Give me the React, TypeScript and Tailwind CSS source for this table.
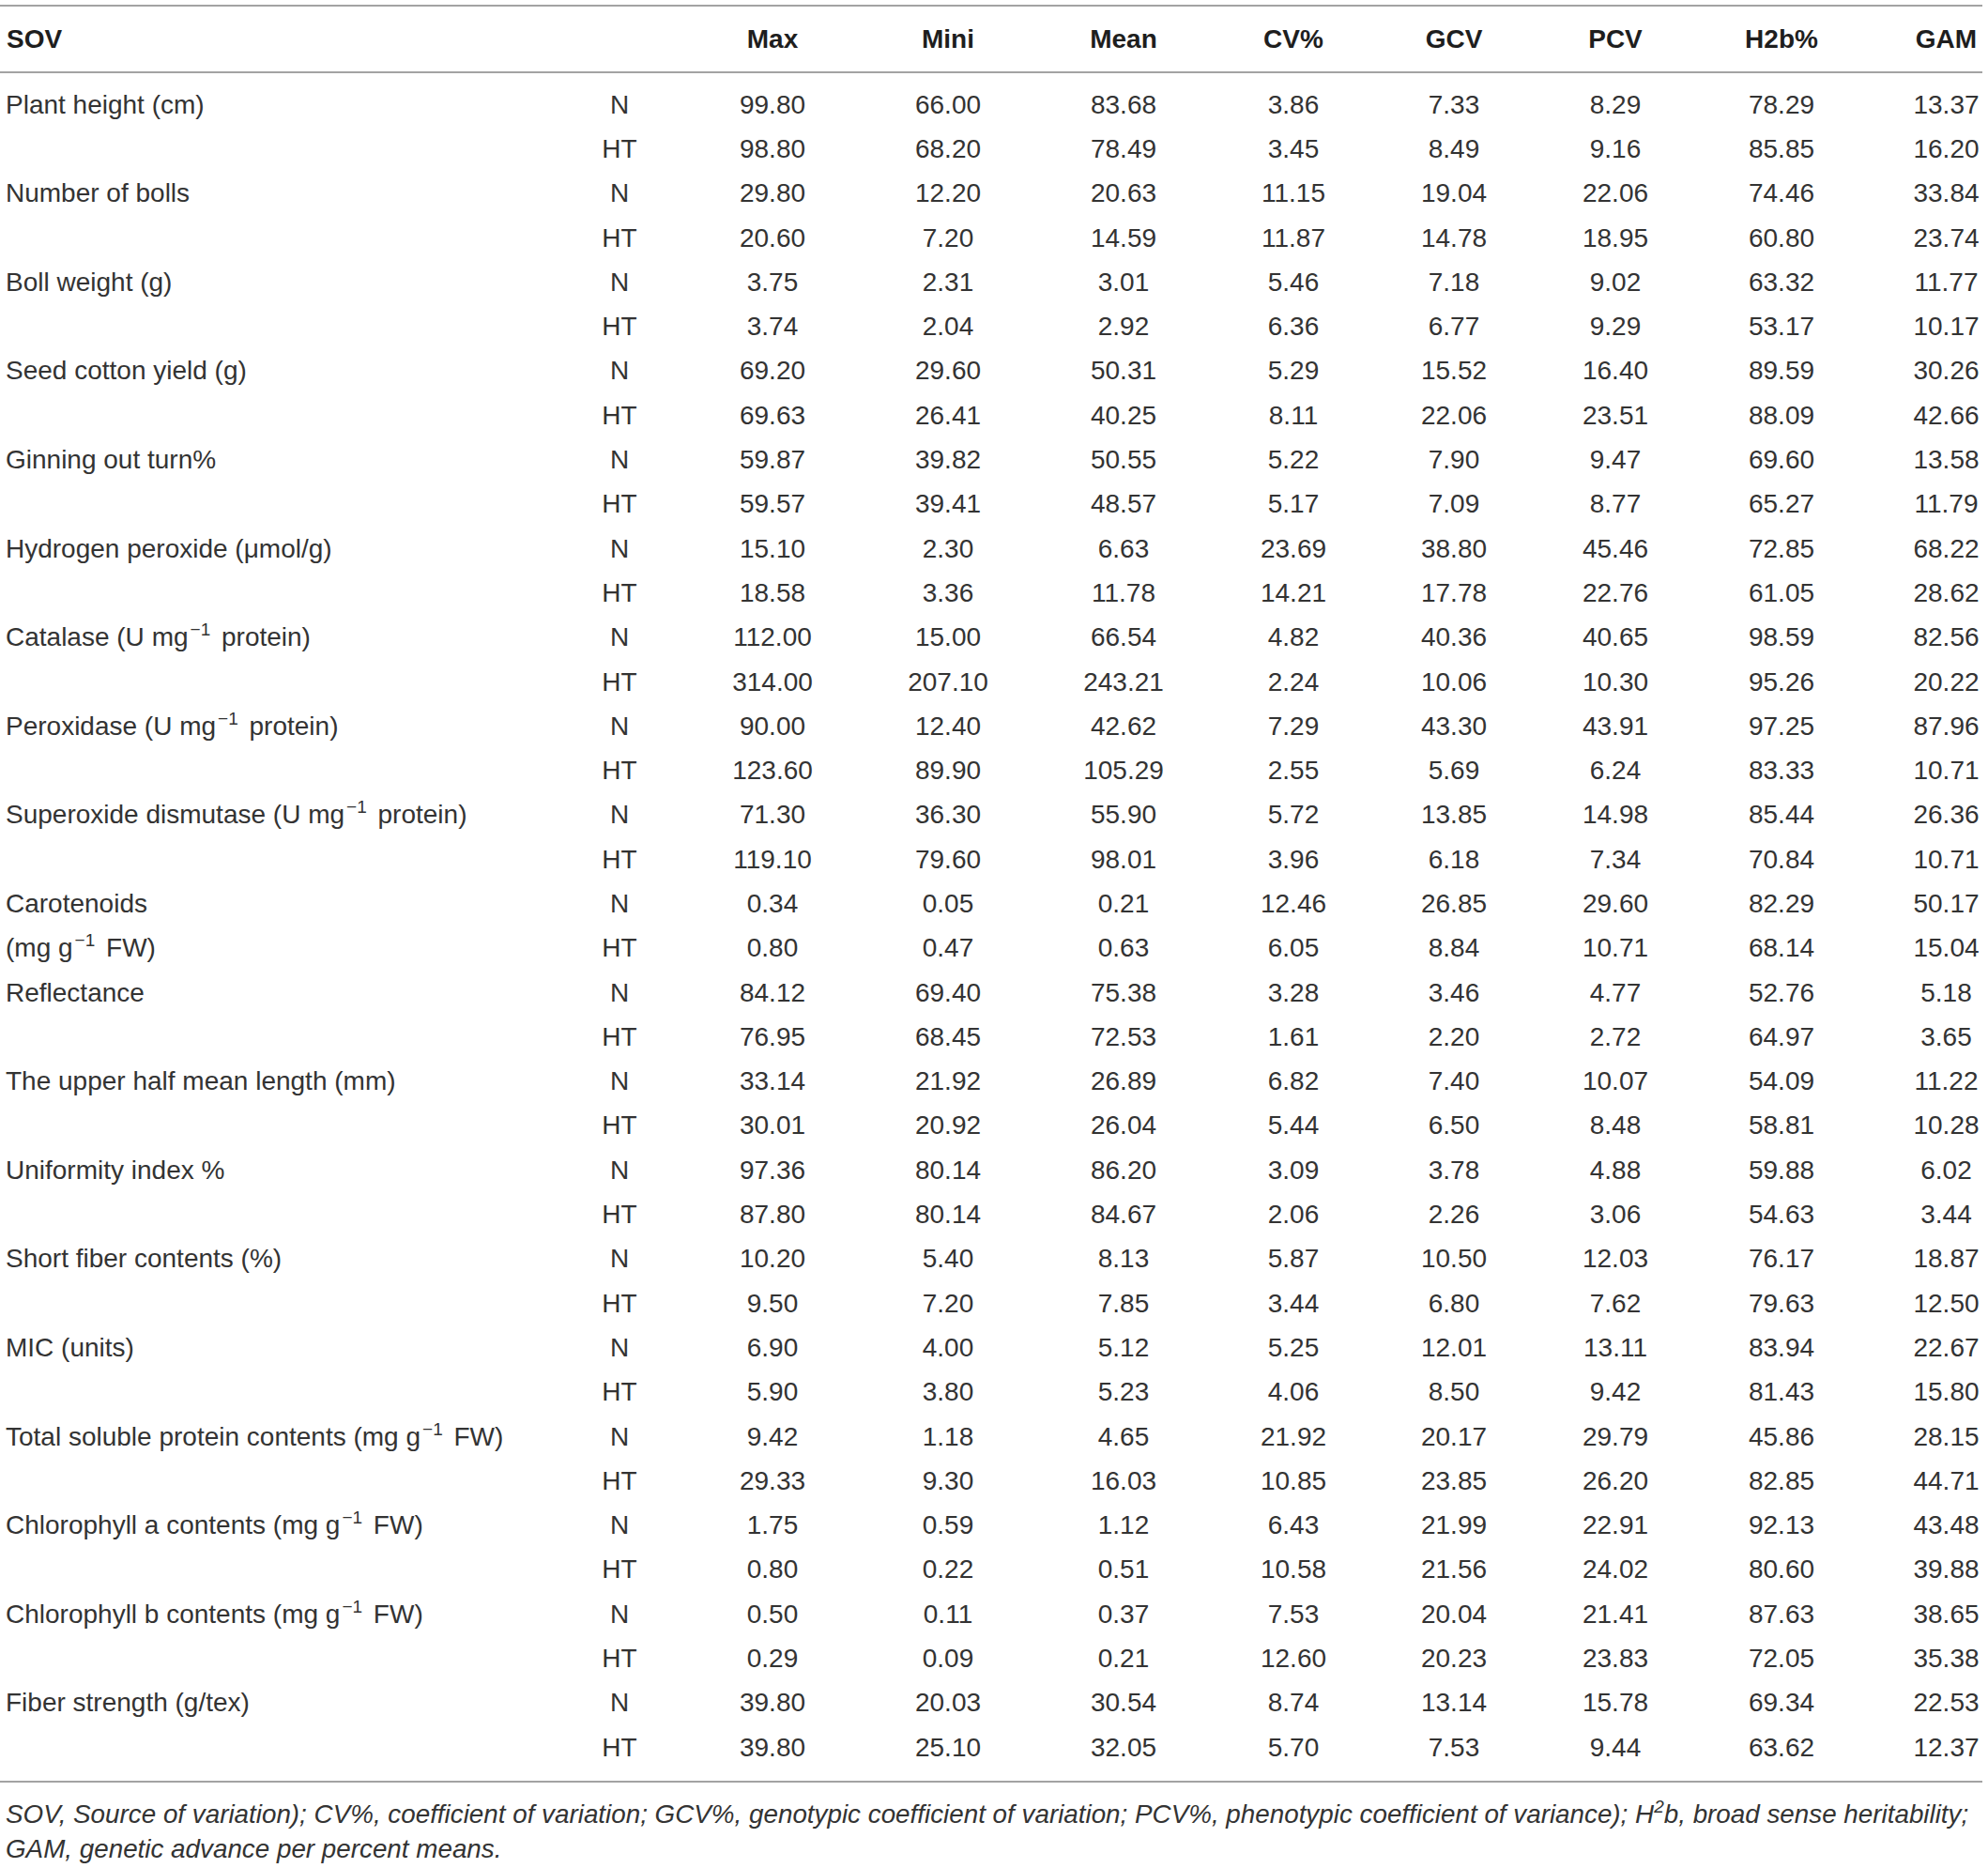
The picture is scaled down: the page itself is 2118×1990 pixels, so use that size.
import React from "react";

const GRID =
  "grid grid-cols-[590px_140px_186px_188px_186px_176px_166px_178px_176px_126px]";

const Sup = ({ children }: { children: React.ReactNode }) => (
  <span className="inline-block text-[19px] leading-none relative top-[-11px] ml-[2px] mr-[4px]">{children}</span>
);

const TightSup = ({ children }: { children: React.ReactNode }) => (
  <span className="inline-block text-[19px] leading-none relative top-[-11px]">{children}</span>
);

const mg = (
  <>
    mg<Sup>−1</Sup>
  </>
);

type Row = { label: React.ReactNode; g: string; v: string[] };

const traits: { n: React.ReactNode; h?: React.ReactNode; N: string; H: string }[] = [
  { n: "Plant height (cm)", N: "99.80 66.00 83.68 3.86 7.33 8.29 78.29 13.37", H: "98.80 68.20 78.49 3.45 8.49 9.16 85.85 16.20" },
  { n: "Number of bolls", N: "29.80 12.20 20.63 11.15 19.04 22.06 74.46 33.84", H: "20.60 7.20 14.59 11.87 14.78 18.95 60.80 23.74" },
  { n: "Boll weight (g)", N: "3.75 2.31 3.01 5.46 7.18 9.02 63.32 11.77", H: "3.74 2.04 2.92 6.36 6.77 9.29 53.17 10.17" },
  { n: "Seed cotton yield (g)", N: "69.20 29.60 50.31 5.29 15.52 16.40 89.59 30.26", H: "69.63 26.41 40.25 8.11 22.06 23.51 88.09 42.66" },
  { n: "Ginning out turn%", N: "59.87 39.82 50.55 5.22 7.90 9.47 69.60 13.58", H: "59.57 39.41 48.57 5.17 7.09 8.77 65.27 11.79" },
  { n: "Hydrogen peroxide (μmol/g)", N: "15.10 2.30 6.63 23.69 38.80 45.46 72.85 68.22", H: "18.58 3.36 11.78 14.21 17.78 22.76 61.05 28.62" },
  { n: <>Catalase (U {mg} protein)</>, N: "112.00 15.00 66.54 4.82 40.36 40.65 98.59 82.56", H: "314.00 207.10 243.21 2.24 10.06 10.30 95.26 20.22" },
  { n: <>Peroxidase (U {mg} protein)</>, N: "90.00 12.40 42.62 7.29 43.30 43.91 97.25 87.96", H: "123.60 89.90 105.29 2.55 5.69 6.24 83.33 10.71" },
  { n: <>Superoxide dismutase (U {mg} protein)</>, N: "71.30 36.30 55.90 5.72 13.85 14.98 85.44 26.36", H: "119.10 79.60 98.01 3.96 6.18 7.34 70.84 10.71" },
  { n: "Carotenoids", h: <>(mg g<Sup>−1</Sup> FW)</>, N: "0.34 0.05 0.21 12.46 26.85 29.60 82.29 50.17", H: "0.80 0.47 0.63 6.05 8.84 10.71 68.14 15.04" },
  { n: "Reflectance", N: "84.12 69.40 75.38 3.28 3.46 4.77 52.76 5.18", H: "76.95 68.45 72.53 1.61 2.20 2.72 64.97 3.65" },
  { n: "The upper half mean length (mm)", N: "33.14 21.92 26.89 6.82 7.40 10.07 54.09 11.22", H: "30.01 20.92 26.04 5.44 6.50 8.48 58.81 10.28" },
  { n: "Uniformity index %", N: "97.36 80.14 86.20 3.09 3.78 4.88 59.88 6.02", H: "87.80 80.14 84.67 2.06 2.26 3.06 54.63 3.44" },
  { n: "Short fiber contents (%)", N: "10.20 5.40 8.13 5.87 10.50 12.03 76.17 18.87", H: "9.50 7.20 7.85 3.44 6.80 7.62 79.63 12.50" },
  { n: "MIC (units)", N: "6.90 4.00 5.12 5.25 12.01 13.11 83.94 22.67", H: "5.90 3.80 5.23 4.06 8.50 9.42 81.43 15.80" },
  { n: <>Total soluble protein contents (mg g<Sup>−1</Sup> FW)</>, N: "9.42 1.18 4.65 21.92 20.17 29.79 45.86 28.15", H: "29.33 9.30 16.03 10.85 23.85 26.20 82.85 44.71" },
  { n: <>Chlorophyll a contents (mg g<Sup>−1</Sup> FW)</>, N: "1.75 0.59 1.12 6.43 21.99 22.91 92.13 43.48", H: "0.80 0.22 0.51 10.58 21.56 24.02 80.60 39.88" },
  { n: <>Chlorophyll b contents (mg g<Sup>−1</Sup> FW)</>, N: "0.50 0.11 0.37 7.53 20.04 21.41 87.63 38.65", H: "0.29 0.09 0.21 12.60 20.23 23.83 72.05 35.38" },
  { n: "Fiber strength (g/tex)", N: "39.80 20.03 30.54 8.74 13.14 15.78 69.34 22.53", H: "39.80 25.10 32.05 5.70 7.53 9.44 63.62 12.37" },
];

const rows: Row[] = traits.flatMap((t) => [
  { label: t.n, g: "N", v: t.N.split(" ") },
  { label: t.h ?? "", g: "HT", v: t.H.split(" ") },
]);

const headers = ["Max", "Mini", "Mean", "CV%", "GCV", "PCV", "H2b%", "GAM"];

export default function App() {
  return (
    <div className="w-[2118px] min-h-[1990px] bg-white pt-[5px] font-['Liberation_Sans',Arial,sans-serif] text-[#333333]">
      <div className="w-[2112px]">
        <div className={`${GRID} h-[73px] items-center border-y-2 border-[#a3a3a3] text-[28px] font-bold text-[#1e1e1e]`}>
          <div className="pl-[7px]">SOV</div>
          <div />
          {headers.map((h, i) => (
            <div key={h} className={i === headers.length - 1 ? "pl-[49px] text-center" : "text-center"}>
              {h}
            </div>
          ))}
        </div>
        <div className="pt-[10px] pb-[12px] border-b-2 border-[#a3a3a3] text-[28px]">
          {rows.map((r, idx) => (
            <div key={idx} className={`${GRID} h-[47.3px] items-center`}>
              <div className="pl-[6px] whitespace-nowrap">{r.label}</div>
              <div className="text-center">{r.g}</div>
              {r.v.map((x, i) => (
                <div key={i} className={i === r.v.length - 1 ? "pl-[49px] text-center" : "text-center"}>
                  {x}
                </div>
              ))}
            </div>
          ))}
        </div>
        <div className="pt-[15px] pl-[6px] italic text-[27.8px] leading-[37px]">
          <div className="whitespace-nowrap">
            SOV, Source of variation); CV%, coefficient of variation; GCV%, genotypic coefficient of variation; PCV%, phenotypic coefficient of variance); H<TightSup>2</TightSup>b, broad sense heritability;
          </div>
          <div className="whitespace-nowrap">GAM, genetic advance per percent means.</div>
        </div>
      </div>
    </div>
  );
}
